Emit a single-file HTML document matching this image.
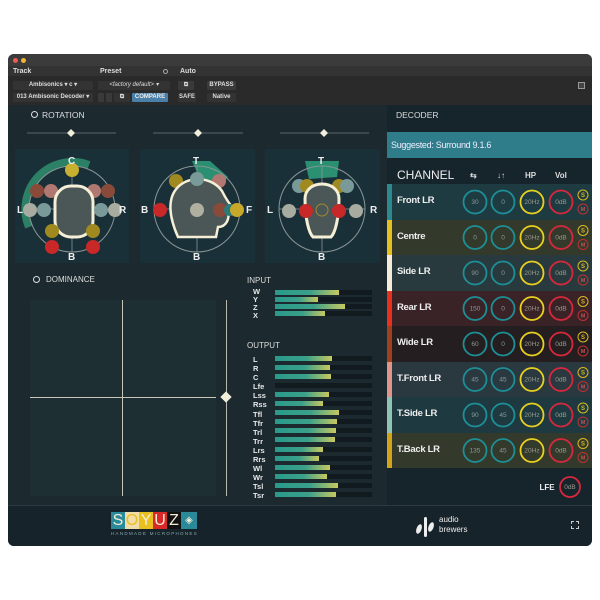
<!DOCTYPE html><html><head><style>
*{margin:0;padding:0;box-sizing:border-box}
body{width:600px;height:600px;background:#fff;position:relative;overflow:hidden;font-family:"Liberation Sans",sans-serif}
.a{position:absolute}
.t{color:#ddd;font-size:7px;font-weight:bold}
.btn{position:absolute;height:9px;background:#3a3a3a;color:#ddd;font-size:6px;font-weight:bold;text-align:center;line-height:9px;border-radius:1px}
.row{position:absolute;left:387px;width:205px;height:35.5px}
.row .s{position:absolute;left:0;top:0;width:5px;height:100%}
.row .n{position:absolute;left:10px;top:11px;color:#eee;font-size:9.5px;font-weight:bold;letter-spacing:-.3px}
.lbl{position:absolute;left:253px;color:#e8e8e8;font-size:7.5px;font-weight:bold;line-height:8px}
.bar{position:absolute;left:275px;width:97px;height:5px;background:#111a1f}
.bar i{display:block;height:100%;background:linear-gradient(90deg,#2a9a8a 0%,#3aa08a 55%,#c8c860 100%)}
</style></head><body>
<div class="a" style="left:8px;top:54px;width:584px;height:492px;background:#1c272d;border-radius:6px;overflow:hidden">
 <div class="a" style="left:0;top:0;width:584px;height:12px;background:#3b3b3b"></div>
 <div class="a" style="left:5px;top:4px;width:5px;height:5px;border-radius:50%;background:#ee5b4f"></div>
 <div class="a" style="left:13px;top:4px;width:5px;height:5px;border-radius:50%;background:#f2b52e"></div>
 <div class="a" style="left:0;top:12px;width:584px;height:39px;background:#2a2a2a"></div>
 <div class="a" style="left:0;top:12px;width:584px;height:10px;background:#333"></div>
</div>
<div class="a t" style="left:13px;top:68px">Track</div>
<div class="a t" style="left:100px;top:68px">Preset</div>
<div class="a" style="left:163px;top:69px;width:5px;height:5px;border:1px solid #aaa;border-radius:50%"></div>
<div class="a t" style="left:180px;top:68px">Auto</div>
<div class="btn" style="left:13px;top:81px;width:80px;background:#333">Ambisonics ▾ c ▾</div>
<div class="btn" style="left:13px;top:93px;width:80px;background:#333">013 Ambisonic Decoder ▾</div>
<div class="btn" style="left:98px;top:81px;width:72px;background:#333;font-style:italic;font-weight:normal">&lt;factory default&gt; ▾</div>
<div class="btn" style="left:98px;top:93px;width:6px"></div>
<div class="btn" style="left:106px;top:93px;width:6px"></div>
<div class="btn" style="left:114px;top:93px;width:16px;background:#333">⧉</div>
<div class="btn" style="left:132px;top:93px;width:36px;background:#4a7fa8;color:#eee">COMPARE</div>
<div class="btn" style="left:178px;top:81px;width:16px">⧉</div>
<div class="btn" style="left:178px;top:93px;width:18px;background:#333">SAFE</div>
<div class="btn" style="left:207px;top:81px;width:29px">BYPASS</div>
<div class="btn" style="left:207px;top:93px;width:29px;background:#333">Native</div>
<div class="a" style="left:578px;top:82px;width:7px;height:7px;border:1px solid #999;background:#444"></div>
<!-- main -->
<div class="a" style="left:8px;top:105px;width:379px;height:400px;background:#1c2a30"></div>
<div class="a" style="left:387px;top:105px;width:205px;height:400px;background:#16242b"></div>
<div class="a" style="left:8px;top:505px;width:584px;height:41px;background:#17232a;border-top:1px solid #2c3b42;border-radius:0 0 6px 6px"></div>
<div class="a" style="left:31px;top:111px;width:7px;height:7px;border:1.3px solid #ddd;border-radius:50%"></div>
<div class="a" style="left:42px;top:110px;color:#ddd;font-size:8.5px">ROTATION</div>
<svg class="a" style="left:0;top:125px" width="387" height="16">
 <g stroke="#6f7a7e" stroke-width="0.8"><line x1="27" y1="8" x2="116" y2="8"/><line x1="153" y1="8" x2="243" y2="8"/><line x1="280" y1="8" x2="369" y2="8"/></g>
 <g fill="#f2eedc"><path d="M71 4l4 4-4 4-4-4z"/><path d="M198 4l4 4-4 4-4-4z"/><path d="M324 4l4 4-4 4-4-4z"/></g>
</svg>
<!-- panel 1 -->
<svg class="a" style="left:15px;top:149px" width="114" height="114" font-family="Liberation Sans" font-weight="bold" font-size="10" fill="#eee">
 <rect width="114" height="114" fill="#1a3038"/>
 <path d="M14 78 A47 47 0 0 1 74 16" stroke="#2e8a6c" stroke-width="8" fill="none" opacity=".9"/>
 <circle cx="57" cy="60" r="43" stroke="#8a9696" stroke-width="1" fill="none"/>
 <line x1="14" y1="60" x2="100" y2="60" stroke="#8a9696" stroke-width=".8"/><line x1="57" y1="17" x2="57" y2="103" stroke="#8a9696" stroke-width=".8"/>
 <circle cx="22" cy="42" r="7" fill="#8a4a3a"/><circle cx="93" cy="42" r="7" fill="#8a4a3a"/>
 <circle cx="36" cy="42" r="7" fill="#b07870"/><circle cx="79" cy="42" r="7" fill="#b07870"/>
 <rect x="40" y="37" width="38" height="51" rx="16" fill="#4b5656" stroke="#f4efd6" stroke-width="3"/>
 <circle cx="57" cy="21" r="7" fill="#c8b030"/>
 <circle cx="15" cy="61" r="7" fill="#a8aca0"/><circle cx="29" cy="61" r="7" fill="#7a9a9a"/>
 <circle cx="86" cy="61" r="7" fill="#7a9a9a"/><circle cx="100" cy="61" r="7" fill="#a8aca0"/>
 <circle cx="37" cy="82" r="7" fill="#a08a20"/><circle cx="78" cy="82" r="7" fill="#a08a20"/>
 <circle cx="37" cy="98" r="7" fill="#c82828"/><circle cx="78" cy="98" r="7" fill="#c82828"/>
 <text x="53" y="15">C</text><text x="2" y="64">L</text><text x="104" y="64">R</text><text x="53" y="111">B</text>
</svg>
<!-- panel 2 -->
<svg class="a" style="left:140px;top:149px" width="115" height="114" font-family="Liberation Sans" font-weight="bold" font-size="10" fill="#eee">
 <rect width="115" height="114" fill="#1a3038"/>
 <path d="M52 12 L70 12 L88 28 L82 35 L60 30 Z" fill="#2e9a78" opacity=".9"/>
 <circle cx="57" cy="60" r="43" stroke="#8a9696" stroke-width="1" fill="none"/>
 <line x1="14" y1="60" x2="100" y2="60" stroke="#8a9696" stroke-width=".8"/><line x1="57" y1="17" x2="57" y2="103" stroke="#8a9696" stroke-width=".8"/>
 <circle cx="36" cy="32" r="7" fill="#a08a20"/><circle cx="79" cy="32" r="7" fill="#b07870"/>
 <path d="M38 88 C30 70 26 50 38 38 C50 26 72 28 82 42 C86 50 90 56 94 60 L88 62 C90 70 86 78 78 78 L76 88 Z" fill="#4b5656" stroke="#f4efd6" stroke-width="2.5"/>
 <circle cx="57" cy="30" r="7" fill="#7a9a9a"/>
 <circle cx="20" cy="61" r="7" fill="#c82828"/><circle cx="57" cy="61" r="7" fill="#b0b0a0"/>
 <circle cx="80" cy="61" r="7" fill="#8a4a3a"/><circle cx="90" cy="61" r="6" fill="#2a7a7a"/><circle cx="97" cy="61" r="7" fill="#c8a828"/>
 <text x="53" y="15">T</text><text x="1" y="64">B</text><text x="106" y="64">F</text><text x="53" y="111">B</text>
</svg>
<!-- panel 3 -->
<svg class="a" style="left:265px;top:149px" width="115" height="114" font-family="Liberation Sans" font-weight="bold" font-size="10" fill="#eee">
 <rect width="115" height="114" fill="#1a3038"/>
 <path d="M40 12 L74 12 L72 28 L44 30 Z" fill="#2e9a78" opacity=".9"/>
 <circle cx="57" cy="60" r="43" stroke="#8a9696" stroke-width="1" fill="none"/>
 <line x1="14" y1="60" x2="100" y2="60" stroke="#8a9696" stroke-width=".8"/><line x1="57" y1="17" x2="57" y2="103" stroke="#8a9696" stroke-width=".8"/>
 <circle cx="34" cy="37" r="7" fill="#7a9a9a"/><circle cx="42" cy="37" r="7" fill="#a08a20"/>
 <circle cx="74" cy="37" r="7" fill="#a08a20"/><circle cx="82" cy="37" r="7" fill="#7a9a9a"/>
 <path d="M40 50 C40 30 74 30 74 50 C74 70 70 84 66 88 L48 88 C44 84 40 70 40 50Z" fill="#4b5656" stroke="#f4efd6" stroke-width="3"/>
 <circle cx="24" cy="62" r="7" fill="#a8aca0"/><circle cx="41" cy="62" r="7" fill="#c82828"/>
 <circle cx="74" cy="62" r="7" fill="#c82828"/><circle cx="91" cy="62" r="7" fill="#a8aca0"/>
 <circle cx="57" cy="61" r="6" fill="none" stroke="#a08a30"/>
 <text x="53" y="15">T</text><text x="2" y="64">L</text><text x="105" y="64">R</text><text x="53" y="111">B</text>
</svg>
<!-- dominance -->
<div class="a" style="left:33px;top:276px;width:7px;height:7px;border:1.3px solid #ddd;border-radius:50%"></div>
<div class="a" style="left:46px;top:275px;color:#ddd;font-size:8px">DOMINANCE</div>
<div class="a" style="left:30px;top:300px;width:186px;height:196px;background:#1e2f34"></div>
<div class="a" style="left:122px;top:300px;width:1px;height:196px;background:#c8c8b8"></div>
<div class="a" style="left:30px;top:397px;width:186px;height:1px;background:#c8c8b8"></div>
<div class="a" style="left:226px;top:300px;width:1px;height:196px;background:#b8b8b0"></div>
<div class="a" style="left:222px;top:393px;width:8px;height:8px;background:#f2eedc;transform:rotate(45deg)"></div>
<div class="a" style="left:247px;top:276px;color:#ddd;font-size:8px">INPUT</div>
<div class="a" style="left:247px;top:341px;color:#ddd;font-size:8px">OUTPUT</div>
<div class="lbl" style="top:288px">W<br>Y<br>Z<br>X</div>
<div class="bar" style="top:290px"><i style="width:64px"></i></div>
<div class="bar" style="top:297px"><i style="width:43px"></i></div>
<div class="bar" style="top:304px"><i style="width:70px"></i></div>
<div class="bar" style="top:311px"><i style="width:50px"></i></div>
<div class="lbl" style="top:355px;line-height:9.1px">L<br>R<br>C<br>Lfe<br>Lss<br>Rss<br>Tfl<br>Tfr<br>Trl<br>Trr<br>Lrs<br>Rrs<br>Wl<br>Wr<br>Tsl<br>Tsr</div>
<div class="bar" style="top:356px"><i style="width:57px"></i></div>
<div class="bar" style="top:365px"><i style="width:55px"></i></div>
<div class="bar" style="top:374px"><i style="width:56px"></i></div>
<div class="bar" style="top:383px"><i style="width:0"></i></div>
<div class="bar" style="top:392px"><i style="width:54px"></i></div>
<div class="bar" style="top:401px"><i style="width:48px"></i></div>
<div class="bar" style="top:410px"><i style="width:64px"></i></div>
<div class="bar" style="top:419px"><i style="width:62px"></i></div>
<div class="bar" style="top:428px"><i style="width:61px"></i></div>
<div class="bar" style="top:437px"><i style="width:60px"></i></div>
<div class="bar" style="top:447px"><i style="width:48px"></i></div>
<div class="bar" style="top:456px"><i style="width:44px"></i></div>
<div class="bar" style="top:465px"><i style="width:55px"></i></div>
<div class="bar" style="top:474px"><i style="width:52px"></i></div>
<div class="bar" style="top:483px"><i style="width:63px"></i></div>
<div class="bar" style="top:492px"><i style="width:61px"></i></div>
<!-- decoder -->
<div class="a" style="left:396px;top:110px;color:#ddd;font-size:8.5px">DECODER</div>
<div class="a" style="left:387px;top:132px;width:205px;height:26px;background:#2f7c8a;color:#eef;font-size:9px;line-height:26px;padding-left:4px;letter-spacing:-.3px">Suggested: Surround 9.1.6</div>
<div class="a" style="left:397px;top:168px;color:#eee;font-size:12px">CHANNEL</div>
<div class="a" style="left:470px;top:171px;color:#ddd;font-size:8px;font-weight:bold">⇆</div>
<div class="a" style="left:497px;top:171px;color:#ddd;font-size:8px;font-weight:bold">↓↑</div>
<div class="a" style="left:525px;top:171px;color:#ddd;font-size:8px;font-weight:bold">HP</div>
<div class="a" style="left:555px;top:171px;color:#ddd;font-size:8px;font-weight:bold">Vol</div>
<div class="row" style="top:184px;background:#1e3b42"><div class="s" style="background:#2a8a8f"></div><div class="n">Front LR</div></div>
<div class="row" style="top:219.5px;background:#33392b"><div class="s" style="background:#e8c01e"></div><div class="n">Centre</div></div>
<div class="row" style="top:255px;background:#283a3e"><div class="s" style="background:#f4ecd8"></div><div class="n">Side LR</div></div>
<div class="row" style="top:290.5px;background:#3a2327"><div class="s" style="background:#e8301c"></div><div class="n">Rear LR</div></div>
<div class="row" style="top:326px;background:#241e20"><div class="s" style="background:#a0401c"></div><div class="n">Wide LR</div></div>
<div class="row" style="top:361.5px;background:#2a3840"><div class="s" style="background:#e0958a"></div><div class="n">T.Front LR</div></div>
<div class="row" style="top:397px;background:#1e3a40"><div class="s" style="background:#8fc4b4"></div><div class="n">T.Side LR</div></div>
<div class="row" style="top:432.5px;background:#33392b"><div class="s" style="background:#d4a418"></div><div class="n">T.Back LR</div></div>
<svg class="a" style="left:387px;top:184px" width="205" height="320" font-family="Liberation Sans" font-size="6.5" text-anchor="middle">
 <defs>
 <g id="k">
  <g fill="none" stroke-width="1.8">
  <circle cx="88" cy="18" r="11.5" stroke="#1e8f96"/><circle cx="116" cy="18" r="11.5" stroke="#1e8f96"/>
  <circle cx="145" cy="18" r="11.5" stroke="#e8d020"/><circle cx="174" cy="18" r="11.5" stroke="#d8283c"/>
  <circle cx="196" cy="11" r="5" stroke="#d8b820" stroke-width="1"/><circle cx="196" cy="25" r="5" stroke="#c03030" stroke-width="1"/>
  </g>
  <text x="196" y="13" font-size="6" font-weight="bold" fill="#d8b820">S</text>
  <text x="196" y="27" font-size="5.5" font-weight="bold" fill="#c05050">M</text>
 </g>
 </defs>
 <use href="#k"/><use href="#k" y="35.5"/><use href="#k" y="71"/><use href="#k" y="106.5"/><use href="#k" y="142"/><use href="#k" y="177.5"/><use href="#k" y="213"/><use href="#k" y="248.5"/>
 <circle cx="183" cy="303" r="10" stroke="#d8283c" stroke-width="1.8" fill="none"/>
 <g fill="#8a9a9a">
 <text x="88" y="20">30</text><text x="116" y="20">0</text>
 <text x="88" y="55.5">0</text><text x="116" y="55.5">0</text>
 <text x="88" y="91">90</text><text x="116" y="91">0</text>
 <text x="88" y="126.5">150</text><text x="116" y="126.5">0</text>
 <text x="88" y="162">60</text><text x="116" y="162">0</text>
 <text x="88" y="197.5">45</text><text x="116" y="197.5">45</text>
 <text x="88" y="233">90</text><text x="116" y="233">45</text>
 <text x="88" y="268.5">135</text><text x="116" y="268.5">45</text>
 </g>
 <g fill="#9a9a8a">
 <text x="145" y="20">20Hz</text><text x="174" y="20">0dB</text>
 <text x="145" y="55.5">20Hz</text><text x="174" y="55.5">0dB</text>
 <text x="145" y="91">20Hz</text><text x="174" y="91">0dB</text>
 <text x="145" y="126.5">20Hz</text><text x="174" y="126.5">0dB</text>
 <text x="145" y="162">20Hz</text><text x="174" y="162">0dB</text>
 <text x="145" y="197.5">20Hz</text><text x="174" y="197.5">0dB</text>
 <text x="145" y="233">20Hz</text><text x="174" y="233">0dB</text>
 <text x="145" y="268.5">20Hz</text><text x="174" y="268.5">0dB</text>
 <text x="183" y="305">0dB</text>
 </g>
 <text x="160" y="306" fill="#eee" font-size="8" font-weight="bold">LFE</text>
</svg>
<!-- footer -->
<div class="a" style="left:111px;top:512px;height:17px;display:flex;font-size:16px;line-height:17px;color:#f4ecd8;font-family:'Liberation Sans Narrow','Liberation Sans',sans-serif">
 <span style="width:14px;background:#2a8a9a;text-align:center">S</span><span style="width:14px;background:#f0dca8;text-align:center;color:#e8c020">O</span><span style="width:14px;background:#e8c020;text-align:center;color:#f4ecd8">Y</span><span style="width:14px;background:#d82828;text-align:center">U</span><span style="width:14px;background:#111;text-align:center">Z</span><span style="width:16px;background:#2a8a9a;text-align:center;font-size:10px">◈</span>
</div>
<div class="a" style="left:111px;top:531px;color:#8aa;font-size:4.5px;letter-spacing:1.3px">HANDMADE MICROPHONES</div>
<svg class="a" style="left:413px;top:514px" width="22" height="24"><ellipse cx="6" cy="15" rx="2.5" ry="5" fill="#eee" transform="rotate(20 6 15)"/><rect x="11" y="3" width="3" height="20" rx="1.5" fill="#eee"/><ellipse cx="18" cy="13" rx="2.5" ry="5" fill="#eee" transform="rotate(20 18 13)"/></svg>
<div class="a" style="left:439px;top:515px;color:#eee;font-size:8px;line-height:10px">audio<br>brewers</div>
<div class="a" style="left:571px;top:521px;width:8px;height:8px;border:1px dashed #ccc"></div>
</body></html>
